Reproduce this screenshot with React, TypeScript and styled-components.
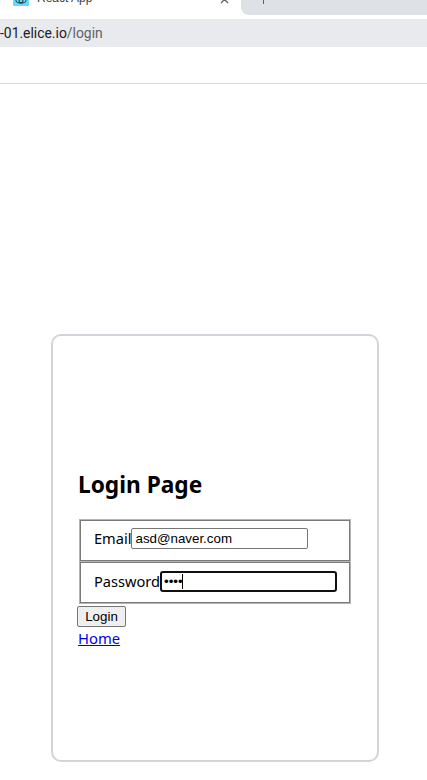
import React from 'react';
import styled, { createGlobalStyle } from 'styled-components';

const GlobalStyle = createGlobalStyle`
  html, body {
    margin: 0;
    padding: 0;
    background: #fff;
  }
  body {
    width: 427px;
    height: 780px;
    overflow: hidden;
    font-family: "Noto Sans", "Open Sans", sans-serif;
    color: #000;
  }
`;

const Chrome = styled.div`
  height: 84px;
  border-bottom: 1px solid #dcdcdc;
  box-sizing: border-box;
`;

const TabStrip = styled.div`
  height: 19px;
  display: flex;
  overflow: hidden;
`;

const ActiveTab = styled.div`
  width: 241px;
  height: 15px;
  display: flex;
  align-items: flex-start;
  box-sizing: border-box;
  padding: 0 12px 0 13px;
  overflow: hidden;
`;

const TabTitle = styled.span`
  flex: 1;
  margin: -8px 0 0 8px;
  font: 12px/12px "Liberation Sans", sans-serif;
  color: #3c4043;
`;

const IdleTab = styled.div`
  flex: 1;
  height: 15px;
  background: #dee1e6;
  border-bottom-left-radius: 8px;
  padding-left: 22px;
`;

const TabDivider = styled.div`
  width: 1px;
  height: 4px;
  background: #5f6368;
`;

const AddressBar = styled.div`
  height: 28px;
  background: #e8eaed;
  display: flex;
  align-items: center;
  font: 13.9px "Roboto", "Liberation Sans", sans-serif;
  color: #202124;
  white-space: nowrap;
`;

const UrlPath = styled.span`
  color: #5f6368;
`;

const Page = styled.div`
  padding: 251px 48px 0 51px;
  margin-top: -1px;
`;

const Card = styled.div`
  height: 428px;
  box-sizing: border-box;
  border: 2px solid #d1d5db;
  border-radius: 10px;
  padding: 132px 24px 0;
`;

const Heading = styled.h1`
  margin: 0 0 18px 1px;
  font-size: 22.7px;
  line-height: 33px;
  font-weight: 700;
`;

const FormBox = styled.div`
  width: 272px;
  margin-left: 2px;
  box-sizing: border-box;
  padding: 1px;
  display: flex;
  flex-direction: column;
  gap: 1px;
  background: #b4b4b4;
`;

const Row = styled.div<{ $top: number }>`
  display: flex;
  align-items: center;
  padding: ${p => p.$top}px 13px ${p => 18 - p.$top}px;
  border: 1px solid #7a7a7a;
  background: #fff;
`;

const Label = styled.label`
  font-size: 14.6px;
  line-height: 21px;
`;

const InputWrap = styled.div`
  position: relative;
  display: flex;
`;

const TextInput = styled.input`
  width: 177px;
  height: 21px;
  box-sizing: border-box;
  padding: 1px 3px;
  border: 1px solid #767676;
  border-radius: 2px;
  font: 13.33px "Liberation Sans", sans-serif;
  color: #000;
  background: #fff;
  outline: none;
`;

const FocusedInput = styled(TextInput)`
  border: 2px solid #101010;
  border-radius: 3px;
  padding: 0 2px;
`;

const Caret = styled.span`
  position: absolute;
  left: 22px;
  top: 3px;
  width: 1px;
  height: 15px;
  background: #000;
`;

const SubmitButton = styled.button`
  display: block;
  height: 21px;
  width: 49px;
  margin-top: 2px;
  padding: 1px 6px;
  box-sizing: border-box;
  font: 13.33px "Liberation Sans", sans-serif;
  color: #000;
  background: #efefef;
  border: 1px solid #767676;
  border-radius: 2px;
`;

const HomeLink = styled.a`
  display: block;
  width: fit-content;
  margin-left: 1px;
  font-size: 14.8px;
  line-height: 22px;
  color: #0000ee;
  text-decoration: underline;
`;

export default function App() {
  return (
    <>
      <GlobalStyle />
      <Chrome>
        <TabStrip>
          <ActiveTab>
            <svg width="16" height="6" viewBox="0 0 16 6">
              <rect width="16" height="6" rx="1" fill="#61dafb" />
              <ellipse cx="8" cy="0.5" rx="5" ry="2.5" fill="none" stroke="#20303a" strokeWidth="1" />
              <circle cx="8" cy="1" r="2" fill="none" stroke="#20303a" strokeWidth="1" />
            </svg>
            <TabTitle>React App</TabTitle>
            <svg width="9" height="4" viewBox="0 0 9 4">
              <path d="M1 -4 L8 3 M8 -4 L1 3" stroke="#5f6368" strokeWidth="1.3" fill="none" />
            </svg>
          </ActiveTab>
          <IdleTab>
            <TabDivider />
          </IdleTab>
        </TabStrip>
        <AddressBar>
          -01.elice.io<UrlPath>/login</UrlPath>
        </AddressBar>
      </Chrome>
      <Page>
        <Card>
          <Heading>Login Page</Heading>
          <FormBox>
            <Row $top={7}>
              <Label>Email</Label>
              <InputWrap>
                <TextInput defaultValue="asd@naver.com" />
              </InputWrap>
            </Row>
            <Row $top={8}>
              <Label>Password</Label>
              <InputWrap>
                <FocusedInput type="password" defaultValue="1234" />
                <Caret />
              </InputWrap>
            </Row>
          </FormBox>
          <SubmitButton>Login</SubmitButton>
          <HomeLink href="#">Home</HomeLink>
        </Card>
      </Page>
    </>
  );
}
